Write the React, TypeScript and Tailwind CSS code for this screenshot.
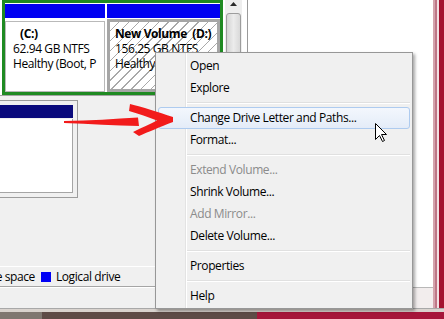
type Item = { label: string; disabled?: boolean; active?: boolean } | 'sep';

const menuItems: Item[] = [
  { label: 'Open' },
  { label: 'Explore' },
  'sep',
  { label: 'Change Drive Letter and Paths...', active: true },
  { label: 'Format...' },
  'sep',
  { label: 'Extend Volume...', disabled: true },
  { label: 'Shrink Volume...' },
  { label: 'Add Mirror...', disabled: true },
  { label: 'Delete Volume...' },
  'sep',
  { label: 'Properties' },
  'sep',
  { label: 'Help' },
];

function DiskRow() {
  return (
    <div className="h-full w-[223px] shrink-0 pl-[2px]">
      <div className="flex h-full gap-[2px] border-[3px] border-[#1f8a22] bg-white pt-[1px]">
        <div className="flex w-[100px] shrink-0 flex-col">
          <div className="h-[14px] bg-[#0000f2]" />
          <div className="mt-[3px] flex-1 overflow-hidden whitespace-nowrap border border-[#b9b9b9] bg-white pl-[7px] pt-[4px] leading-[15px]">
            <div className="pl-[7px] font-bold">(C:)</div>
            <div>62.94 GB NTFS</div>
            <div>Healthy (Boot, P</div>
          </div>
        </div>
        <div className="flex min-w-0 flex-1 flex-col">
          <div className="h-[14px] bg-[#0000f2]" />
          <div className="mt-[1px] flex-1 overflow-hidden whitespace-pre border-[3px] border-[#a6a6a6] bg-[repeating-linear-gradient(135deg,#ffffff_0px,#ffffff_6px,#a9a9a9_6px,#a9a9a9_7px)] pl-[5px] pt-[4px] leading-[15px]">
            <div className="font-bold">New Volume  (D:)</div>
            <div>156.25 GB NTFS</div>
            <div>Healthy (Logical Drive)</div>
          </div>
        </div>
      </div>
    </div>
  );
}

function Scrollbar() {
  return (
    <div className="flex h-full w-[24px] shrink-0 bg-white pl-[2px]">
      <div className="flex w-[17px] flex-col bg-[#eeeeee]">
        <div className="flex h-[13px] items-start justify-center pt-[2px]">
          <svg width="7" height="4" viewBox="0 0 7 4">
            <polygon points="3.5,0 7,4 0,4" fill="#2a2a2a" />
          </svg>
        </div>
        <div className="mx-[1px] flex-1 rounded-[3px] border border-[#9d9d9d] bg-gradient-to-r from-[#d4d4d4] via-[#ececec] to-[#d9d9d9]" />
      </div>
    </div>
  );
}

function LowerArea() {
  return (
    <div className="flex flex-1 flex-col border-t border-[#a3a3a3]">
      <div className="pt-[4px]">
        <div className="w-[78px] border-y border-r border-[#9c9c9c] pb-[4px] pr-[4px] pt-[4px]">
          <div className="h-[13px] bg-[#0a0a7c]" />
          <div className="mt-[1px] h-[74px] border-b border-r border-[#a5a5a5] bg-white" />
        </div>
      </div>
      <div className="flex-1" />
      <div className="flex h-[21px] items-center overflow-hidden whitespace-nowrap border-b border-t border-b-[#a5a5a5] border-t-white">
        <span className="-ml-[21px] shrink-0">Free space</span>
        <span className="ml-[6px] h-[10px] w-[10px] shrink-0 bg-[#0000f5]" />
        <span className="ml-[5px] shrink-0">Logical drive</span>
      </div>
      <div className="h-[21px] border-t border-white" />
    </div>
  );
}

function ContextMenu() {
  return (
    <div className="absolute left-[155px] top-[52px] w-[258px] border border-[#979797] bg-[#f0f0f0] px-[2px] pb-[1px] pt-[2px] shadow-[2px_2px_3px_rgba(0,0,0,0.35)]">
      <div className="absolute bottom-0 left-[29px] top-0 w-[1px] bg-[#e3e3e3]" />
      <div className="absolute bottom-0 left-[30px] top-0 w-[1px] bg-white" />
      {menuItems.map((it, i) =>
        it === 'sep' ? (
          <div key={i} className="relative flex h-[8px] flex-col justify-center pl-[29px]">
            <div className="h-[1px] bg-[#e0e0e0]" />
            <div className="h-[1px] bg-white" />
          </div>
        ) : (
          <div
            key={i}
            className={
              'relative h-[22px] rounded-[3px] border pl-[31px] leading-[20px] ' +
              (it.active
                ? 'border-[#aecbef] bg-gradient-to-b from-[#f3f7fd] to-[#e4ecf8] '
                : 'border-transparent ') +
              (it.disabled ? 'text-[#8b8b8b]' : 'text-black')
            }
          >
            {it.label}
          </div>
        )
      )}
    </div>
  );
}

function RedArrow() {
  return (
    <svg
      className="absolute left-[60px] top-[100px]"
      width="120"
      height="40"
      viewBox="60 100 120 40"
    >
      <path
        d="M64,121 C90,120.5 115,119 138,117.5 L139,126 C115,125.5 90,124 64,123 Z"
        fill="#f21b1b"
      />
      <path
        d="M130,104 C142,107 158,112 173,117 L173,122 C160,127 148,132 139,136 L133,132 C142,127.5 150,124 157,120.5 C148,117 139,114 129,111 Z"
        fill="#f21b1b"
      />
    </svg>
  );
}

function Cursor() {
  return (
    <svg className="absolute left-[375px] top-[123px]" width="13" height="20" viewBox="0 0 13 20">
      <polygon
        points="0.5,0.5 0.5,16.5 4.5,12.5 7.5,18.5 9.5,17.5 6.5,11.5 11.5,11.5"
        fill="#ffffff"
        stroke="#000000"
        strokeWidth="1"
        strokeLinejoin="miter"
      />
    </svg>
  );
}

export default function App() {
  return (
    <div className="relative h-[319px] w-[444px] overflow-hidden bg-[#f0f0f0] font-['Open_Sans',sans-serif] text-[12px] tracking-[-0.4px] text-black">
      <div className="flex h-[308px]">
        <div className="flex w-[248px] flex-col border-r border-[#9a9a9a]">
          <div className="flex h-[95px] bg-white">
            <DiskRow />
            <Scrollbar />
          </div>
          <LowerArea />
        </div>
        <div className="flex flex-1 flex-col bg-white">
          <div className="flex-1" />
          <div className="h-[21px] border-t border-[#b8b8b8] bg-[#f2eded]" />
        </div>
        <div className="flex w-[11px]">
          <div className="w-[2px] bg-[#d4a3ad]" />
          <div className="w-[2px] bg-[#bf7787]" />
          <div className="w-[2px] bg-[#f3e0e4]" />
          <div className="flex-1 bg-[#a4122f]" />
        </div>
      </div>
      <div className="flex h-[11px] flex-col">
        <div className="h-[1px] bg-[#a8a8a8]" />
        <div className="h-[3px] bg-[#d9d3ce]" />
        <div className="flex flex-1">
          <div className="w-[42px] bg-[#7f7770]" />
          <div className="w-[215px] bg-[#5e4b46]" />
          <div className="flex-1 bg-[#a6163a]" />
        </div>
      </div>
      <ContextMenu />
      <RedArrow />
      <Cursor />
    </div>
  );
}
